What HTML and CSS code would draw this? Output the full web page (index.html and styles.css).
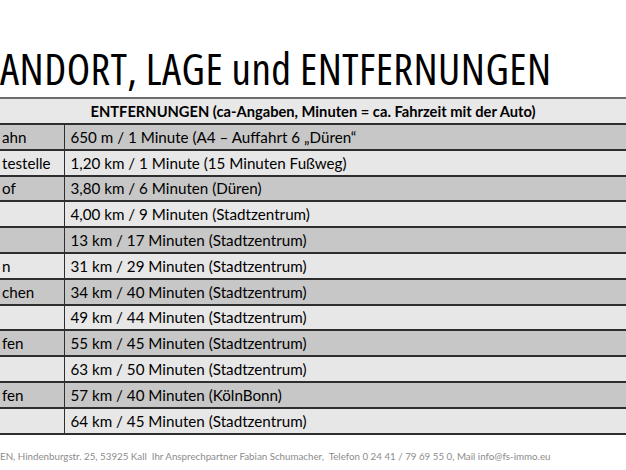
FILE: index.html
```html
<!DOCTYPE html>
<html lang="de">
<head>
<meta charset="utf-8">
<title>Standort, Lage und Entfernungen</title>
<link rel="stylesheet" href="styles.css">
</head>
<body>
<div class="slide">
  <h1 class="title">ANDORT, LAGE und ENTFERNUNGEN</h1>
  <table class="dist">
    <colgroup><col class="c1"><col class="c2"></colgroup>
    <thead>
      <tr><th colspan="2">ENTFERNUNGEN (ca-Angaben, Minuten = ca. Fahrzeit mit der Auto)</th></tr>
    </thead>
    <tbody>
      <tr class="dark"><td class="place">ahn</td><td class="val">650 m / 1 Minute (A4 – Auffahrt 6 „Düren“</td></tr>
      <tr class="light"><td class="place">testelle</td><td class="val">1,20 km / 1 Minute (15 Minuten Fußweg)</td></tr>
      <tr class="dark"><td class="place">of</td><td class="val">3,80 km / 6 Minuten (Düren)</td></tr>
      <tr class="light"><td class="place"></td><td class="val">4,00 km / 9 Minuten (Stadtzentrum)</td></tr>
      <tr class="dark"><td class="place"></td><td class="val">13 km / 17 Minuten (Stadtzentrum)</td></tr>
      <tr class="light"><td class="place">n</td><td class="val">31 km / 29 Minuten (Stadtzentrum)</td></tr>
      <tr class="dark"><td class="place">chen</td><td class="val">34 km / 40 Minuten (Stadtzentrum)</td></tr>
      <tr class="light"><td class="place"></td><td class="val">49 km / 44 Minuten (Stadtzentrum)</td></tr>
      <tr class="dark"><td class="place">fen</td><td class="val">55 km / 45 Minuten (Stadtzentrum)</td></tr>
      <tr class="light"><td class="place"></td><td class="val">63 km / 50 Minuten (Stadtzentrum)</td></tr>
      <tr class="dark"><td class="place">fen</td><td class="val">57 km / 40 Minuten (KölnBonn)</td></tr>
      <tr class="light"><td class="place"></td><td class="val">64 km / 45 Minuten (Stadtzentrum)</td></tr>
    </tbody>
  </table>
  <p class="footer">EN, Hindenburgstr. 25, 53925 Kall&nbsp; Ihr Ansprechpartner Fabian Schumacher,&nbsp; Telefon 0 24 41 / 79 69 55 0, Mail info@fs-immo.eu</p>
</div>
</body>
</html>
```

FILE: styles.css
```css
html, body {
  margin: 0;
  padding: 0;
  background: #ffffff;
}

.slide {
  width: 626px;
  height: 470px;
  overflow: hidden;
  font-family: Lato, "Open Sans", "Liberation Sans", sans-serif;
  color: #000;
}

.title {
  margin: 0;
  height: 97px;
  box-sizing: border-box;
  padding-top: 46px;
  font-family: "Open Sans", Lato, sans-serif;
  font-stretch: 80%;
  font-weight: 400;
  font-size: 43px;
  line-height: 46px;
  white-space: nowrap;
  letter-spacing: 0.5px;
}

.dist {
  width: 626px;
  border-collapse: collapse;
  table-layout: fixed;
  font-size: 15.2px;
}

.dist col.c1 { width: 64px; }
.dist col.c2 { width: 562px; }

.dist th {
  height: 24px;
  padding: 0;
  background: #e8e8e8;
  border-top: 2px solid #6e6e6e;
  border-bottom: 2px solid #2e2e2e;
  font-size: 14.7px;
  font-weight: 700;
  text-align: center;
  white-space: nowrap;
}

.dist td {
  height: 23.8px;
  padding: 0;
  border-bottom: 2px solid #2e2e2e;
  white-space: nowrap;
  overflow: hidden;
}

.dist tr.dark td { background: #c7c7c7; }
.dist tr.light td { background: #e7e7e7; }

.dist td.place {
  padding-left: 2px;
  border-right: 1px solid #2e2e2e;
}

.dist td.val {
  padding-left: 6px;
}

.footer {
  margin: 15px 0 0 0;
  font-size: 9.75px;
  color: #8c8c8c;
  white-space: nowrap;
}
```
